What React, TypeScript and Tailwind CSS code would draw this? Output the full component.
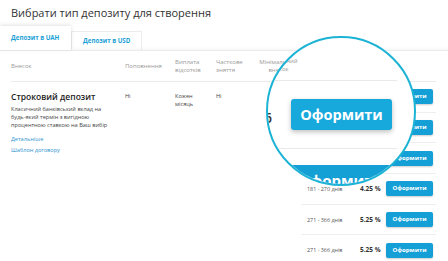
import React from "react";

const rates = [
    {term: "91 - 180 днів", rate: "3.25 %"},
    {term: "91 - 180 днів", rate: "3.75 %"},
    {term: "181 - 270 днів", rate: "4.25 %"},
    {term: "181 - 270 днів", rate: "4.25 %"},
    {term: "271 - 366 днів", rate: "5.25 %"},
    {term: "271 - 366 днів", rate: "5.25 %"},
];

const Magnifier = () => (
    // positions inside are page coords minus (268, 38)
    <div className="absolute left-[266px] top-[36px] w-[150px] h-[150px] rounded-full border-2 border-[#1cb3d5] bg-white overflow-hidden z-20">
        <div className="absolute left-[-12px] top-[19px] w-[45px] text-center text-[6px] leading-[8px] text-[#9a9a9a]">
            Мінімальний внесок
        </div>
        <div className="absolute left-0 top-[42px] w-[129px] h-px bg-[#e9e9e9]"/>
        <div className="absolute left-[-3px] top-[51px] text-[8px] text-[#444]">1</div>
        <div className="absolute left-[-4px] top-[69px] text-[14px] font-semibold text-[#333]">6</div>
        <div
            className="absolute left-[23px] top-[61px] w-[101px] h-[31px] rounded-[3px] bg-[#17a9dc] shadow-[0_2px_5px_rgba(0,0,0,0.25)] flex items-center justify-center text-white text-[14.5px] font-bold">
            Оформити
        </div>
        <div className="absolute left-0 top-[110px] w-[129px] h-px bg-[#e9e9e9]"/>
        <div className="absolute left-0 top-[127px] w-[129px] h-[30px] bg-[#149fd5]">
            <div className="absolute left-[30px] top-[4px] text-white text-[15px] font-bold">Оформити</div>
        </div>
    </div>
);

export default function App() {
    return (
        <div className="relative w-[448px] h-[261px] overflow-hidden bg-white font-['Open_Sans',sans-serif]">
            <div className="h-[27px] pl-[11px] pt-[5px] text-[11px] text-[#333] font-medium">
                Вибрати тип депозиту для створення
            </div>

            <div className="flex items-end h-[23px]">
                <div
                    className="relative z-10 w-[71px] h-[24px] bg-white shadow-[0_-1px_4px_rgba(0,0,0,0.12)] pl-[11px] flex items-center text-[6.2px] font-bold text-[#1a9fd6]">
                    Депозит в UAH
                </div>
                <div
                    className="w-[71px] h-[19px] bg-white border border-b-0 border-[#ececec] pl-[11px] flex items-center text-[6.2px] font-bold text-[#1a9fd6]">
                    Депозит в USD
                </div>
            </div>

            <div className="relative border-t border-[#ececec] shadow-[0_-1px_3px_rgba(0,0,0,0.05)] px-[11px]">
                <div className="flex items-center h-[31px] w-[425px] border-b border-[#ececec] text-[6px] leading-[8px] text-[#9a9a9a]">
                    <div className="w-[114px]">Внесок</div>
                    <div className="w-[50px]">Поповнення</div>
                    <div className="w-[41px]">Виплата<br/>відсотків</div>
                    <div className="w-[40px]">Часткове<br/>зняття</div>
                    <div className="w-[45px] text-center">Мінімальний внесок</div>
                </div>

                <div className="flex">
                    <div className="flex w-[290px] pt-[9px] text-[6px] leading-[8px] text-[#444]">
                        <div className="w-[114px] pr-[12px]">
                            <div className="text-[8.5px] leading-[12px] font-semibold text-[#222] mb-[3px]">Строковий депозит</div>
                            <div className="text-[5.6px] leading-[7.8px]">
                                Класичний банківський вклад на будь-який термін з вигідною процентною ставкою на Ваш вибір
                            </div>
                            <div className="mt-[6px] text-[5.6px] text-[#2f94d0]">Детальніше</div>
                            <div className="mt-[3px] text-[5.6px] text-[#2f94d0]">Шаблон договору</div>
                        </div>
                        <div className="w-[50px] pt-[1px] text-[5.6px]">Ні</div>
                        <div className="w-[41px] pt-[1px] text-[5.6px]">Кожен<br/>місяць</div>
                        <div className="w-[40px] pt-[1px] text-[5.6px]">Ні</div>
                        <div className="w-[45px]"/>
                    </div>

                    <div className="w-[135px]">
                        {rates.map((r, i) => (
                            <div key={i} className="flex items-center h-[30.7px] border-b border-[#eeeeee]">
                                <div className="w-[59px] pl-[6px] text-[5.4px] text-[#555] whitespace-nowrap">{r.term}</div>
                                <div className="w-[26px] text-[6.5px] font-bold text-[#333]">{r.rate}</div>
                                <div
                                    className="w-[47px] h-[15px] rounded-[2px] bg-[#159fd7] shadow-[0_1px_2px_rgba(0,0,0,0.2)] flex items-center justify-center text-[6px] font-bold text-white">
                                    Оформити
                                </div>
                            </div>
                        ))}
                    </div>
                </div>
            </div>

            <Magnifier/>
        </div>
    );
}
